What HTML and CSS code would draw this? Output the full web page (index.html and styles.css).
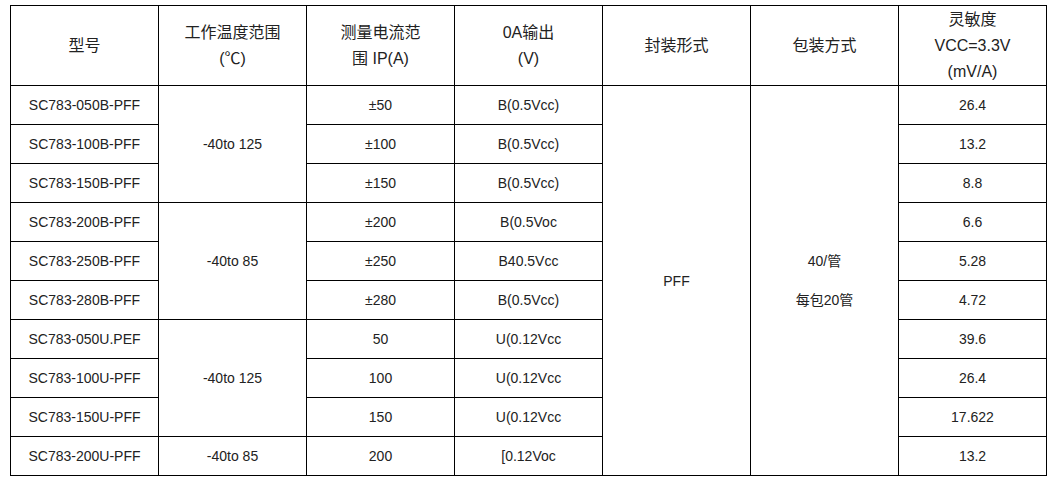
FILE: index.html
```html
<!DOCTYPE html>
<html lang="zh">
<head>
<meta charset="utf-8">
<title>SC783 型号表</title>
<link rel="stylesheet" href="styles.css">
</head>
<body>
<table class="spec">
  <colgroup>
    <col class="c"><col class="c"><col class="c"><col class="c"><col class="c"><col class="c"><col class="c-last">
  </colgroup>
  <thead>
    <tr class="head">
      <th>型号</th>
      <th>工作温度范围<br>(℃)</th>
      <th>测量电流范<br>围 IP(A)</th>
      <th>0A输出<br>(V)</th>
      <th>封装形式</th>
      <th>包装方式</th>
      <th>灵敏度<br>VCC=3.3V<br>(mV/A)</th>
    </tr>
  </thead>
  <tbody>
    <tr><td>SC783-050B-PFF</td><td rowspan="3">-40to 125</td><td>±50</td><td>B(0.5Vcc)</td>
      <td rowspan="10">PFF</td>
      <td rowspan="10"><div class="pack"><span>40/管</span><span>每包20管</span></div></td>
      <td>26.4</td></tr>
    <tr><td>SC783-100B-PFF</td><td>±100</td><td>B(0.5Vcc)</td><td>13.2</td></tr>
    <tr><td>SC783-150B-PFF</td><td>±150</td><td>B(0.5Vcc)</td><td>8.8</td></tr>
    <tr><td>SC783-200B-PFF</td><td rowspan="3">-40to 85</td><td>±200</td><td>B(0.5Voc</td><td>6.6</td></tr>
    <tr><td>SC783-250B-PFF</td><td>±250</td><td>B40.5Vcc</td><td>5.28</td></tr>
    <tr><td>SC783-280B-PFF</td><td>±280</td><td>B(0.5Vcc)</td><td>4.72</td></tr>
    <tr><td>SC783-050U.PEF</td><td rowspan="3">-40to 125</td><td>50</td><td>U(0.12Vcc</td><td>39.6</td></tr>
    <tr><td>SC783-100U-PFF</td><td>100</td><td>U(0.12Vcc</td><td>26.4</td></tr>
    <tr><td>SC783-150U-PFF</td><td>150</td><td>U(0.12Vcc</td><td>17.622</td></tr>
    <tr><td>SC783-200U-PFF</td><td>-40to 85</td><td>200</td><td>[0.12Voc</td><td>13.2</td></tr>
  </tbody>
</table>
</body>
</html>
```
FILE: styles.css
```css
html, body {
  margin: 0;
  background: #fff;
}
body {
  padding: 5px 0 0 10px;
  font-family: "Liberation Sans", Arial, "Noto Sans CJK SC", sans-serif;
  color: #222;
}
.spec {
  border-collapse: collapse;
  table-layout: fixed;
  width: 1036px;
}
.spec .c { width: 148px; }
.spec .c-last { width: 148px; }
.spec th,
.spec td {
  border: 1px solid #000;
  padding: 0;
  text-align: center;
  vertical-align: middle;
}
.spec th {
  font-weight: normal;
  font-size: 16px;
  line-height: 26px;
  height: 79px;
}
.spec td {
  font-size: 14px;
  line-height: 18px;
  height: 38px;
}
.pack {
  display: flex;
  flex-direction: column;
  align-items: center;
  gap: 21px;
}
```
